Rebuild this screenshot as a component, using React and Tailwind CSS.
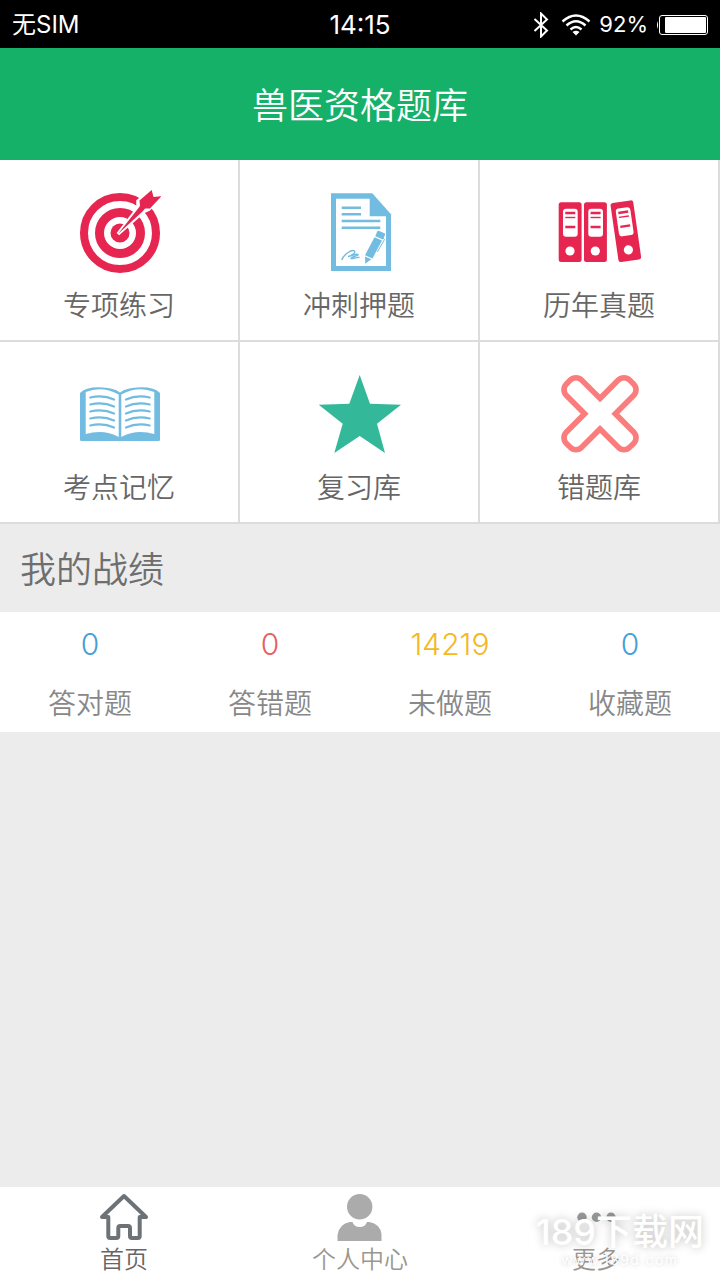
import React, { useState } from "react";

const TargetIcon = () => (
  <svg viewBox="0 0 84 84" className="w-[84px] h-[84px]" fill="none">
    <circle cx="43" cy="43" r="36" stroke="#e62550" strokeWidth="8" />
    <circle cx="43" cy="43" r="20.5" stroke="#e62550" strokeWidth="9" />
    <circle cx="43" cy="43" r="9.5" fill="#e62550" />
    <path
      d="M41 44L61 18L61 11L74 1L77 8L83 7L72 19L66 22Z"
      fill="#fff"
      stroke="#fff"
      strokeWidth="3.5"
    />
    <path
      d="M41 44L61.5 18L63 16L62.500 10.500L74.700 0L76.500 7L84.500 6.300L73 18.500L68 18.500L65.500 21.500Z"
      fill="#e62550"
    />
  </svg>
);

const PaperIcon = () => (
  <svg viewBox="0 0 84 84" className="w-[84px] h-[84px]" fill="none">
    <path d="M14 3.300H55.300L74 24.300V81H14Z" fill="#71bce0" />
    <path d="M19 8.700H52.700V26.300H69V76H19Z" fill="#fff" />
    <path
      d="M24.700 17.700H44M24.700 24.300H44M24.700 31H63.300M24.700 37.700H63.300"
      stroke="#71bce0"
      strokeWidth="2.4"
    />
    <path
      d="M24.700 70C27 64 35 59 37.500 61C39 63 34 66 31 66.500C35 66 40 63 41 64.500C41.500 66 34 66.500 34 68.500C36 69.500 39 66.500 42.500 67.500"
      stroke="#71bce0"
      strokeWidth="1.400"
    />
    <path
      d="M61.500 40.700L67.500 43.300Q68.500 44 68 45L66 49.500L58.300 46.300L60.200 41.500Q60.600 40.500 61.500 40.700Z"
      fill="#71bce0"
    />
    <path d="M57.500 47.200L65 50.500L55.500 68.500L48 65.300Z" fill="#71bce0" />
    <path d="M48 66.500L54.300 69.200L48.300 73.700Z" fill="#71bce0" />
    <path d="M65 47.500L67.500 49.500L60.300 62" stroke="#71bce0" strokeWidth="1" />
  </svg>
);

const Binder = ({ transform }) => (
  <g transform={transform}>
    <rect x="1.700" y="12.300" width="22.900" height="59.700" rx="2.500" fill="#e62550" />
    <rect x="6" y="18.700" width="14.700" height="28" rx="3" fill="#fff" />
    <path d="M8.300 23H18.300M8.300 37H18.300" stroke="#e62550" strokeWidth="2.4" />
    <path d="M8.300 27.500H18.300" stroke="#e62550" strokeWidth="1.400" />
    <circle cx="13" cy="61" r="4.600" fill="#fff" />
  </g>
);

const BindersIcon = () => (
  <svg viewBox="0 0 84 84" className="w-[84px] h-[84px] overflow-visible">
    <Binder />
    <Binder transform="translate(25.300 0)" />
    <Binder transform="translate(68.700 41.300) rotate(-8.200) translate(-13 -42.200)" />
  </svg>
);

const BookIcon = () => (
  <svg viewBox="0 0 84 84" className="w-[84px] h-[84px]" fill="none">
    <path
      d="M3 21Q8 15.300 22 15.300Q37 15.500 43 20.500Q49 15.500 64 15.300Q78 15.300 83 21V67.500Q83 69 81.500 69H4.500Q3 69 3 67.500Z"
      fill="#71bce0"
    />
    <path d="M8.700 20Q25 13.500 41.700 22.500V65Q27 57 8.700 62Z" fill="#fff" />
    <path d="M77.300 20Q61 13.500 44.300 22.500V65Q59 57 77.300 62Z" fill="#fff" />
    {[25.5, 32.5, 39.5, 46.5, 53.5].map((y) => (
      <path
        key={`line-${y}`}
        d={`M13.300 ${y}Q26 ${y - 3} 37 ${y + 2}M72.700 ${y}Q60 ${y - 3} 49 ${y + 2}`}
        stroke="#71bce0"
        strokeWidth="2.200"
        strokeLinecap="round"
      />
    ))}
  </svg>
);

const StarIcon = () => (
  <svg viewBox="0 0 84 84" className="w-[84px] h-[84px]">
    <path
      d="M42.700 3L53 31.700L84 32.700L60 51.700L68 81L42.700 64L17.300 81L25.700 51.700L1.700 32.700L32.300 31.700Z"
      fill="#33b999"
    />
  </svg>
);

const CrossIcon = () => (
  <svg viewBox="0 0 84 84" className="w-[84px] h-[84px]" fill="none">
    <path
      transform="translate(43 41.700)"
      d="M0 -15.300L18.300 -33.600A8 8 0 0 1 29.700 -33.600L33.600 -29.700A8 8 0 0 1 33.600 -18.300L15.300 0L33.600 18.300A8 8 0 0 1 33.600 29.700L29.700 33.600A8 8 0 0 1 18.300 33.600L0 15.300L-18.300 33.600A8 8 0 0 1 -29.700 33.600L-33.600 29.700A8 8 0 0 1 -33.600 18.300L-15.300 0L-33.600 -18.300A8 8 0 0 1 -33.600 -29.700L-29.700 -33.600A8 8 0 0 1 -18.300 -33.600Z"
      stroke="#fb7c7c"
      strokeWidth="5.600"
    />
  </svg>
);

const HomeIcon = () => (
  <svg viewBox="0 0 50 50" className="w-[50px] h-[50px]" fill="none">
    <path
      d="M25 4L47 25H40.700V44Q40.700 46 38.700 46H33Q31 46 31 44V36Q31 34 29 34H21.300Q19.300 34 19.300 36V44Q19.300 46 17.300 46H11.300Q9.300 46 9.300 44V25H3Z"
      stroke="#6c7275"
      strokeWidth="4"
      strokeLinejoin="round"
    />
  </svg>
);

const PersonIcon = () => (
  <svg viewBox="0 0 50 50" className="w-[50px] h-[50px]" fill="#ababab">
    <circle cx="24.700" cy="14.700" r="12.700" />
    <path d="M2.500 49V43Q4 32 15 30H17.500Q19 35 24.700 35Q30.500 35 32 30H34.500Q45 32 46.500 42V49Z" />
  </svg>
);

const MoreIcon = () => (
  <svg viewBox="0 0 50 50" className="w-[50px] h-[50px]" fill="#999">
    <circle cx="11" cy="25.300" r="4.700" />
    <circle cx="25.500" cy="25.300" r="4.700" />
    <circle cx="40" cy="25.300" r="4.700" />
  </svg>
);

const menu = [
  { name: "专项练习", Icon: TargetIcon },
  { name: "冲刺押题", Icon: PaperIcon },
  { name: "历年真题", Icon: BindersIcon },
  { name: "考点记忆", Icon: BookIcon },
  { name: "复习库", Icon: StarIcon },
  { name: "错题库", Icon: CrossIcon },
];

const scores = [
  { name: "答对题", value: 0, color: "text-[#45a0d8]" },
  { name: "答错题", value: 0, color: "text-[#e65f66]" },
  { name: "未做题", value: 14219, color: "text-[#f5b81f]" },
  { name: "收藏题", value: 0, color: "text-[#45a0d8]" },
];

const tabs = [
  { name: "首页", Icon: HomeIcon },
  { name: "个人中心", Icon: PersonIcon },
  { name: "更多", Icon: MoreIcon },
];

const StatusBar = () => (
  <div className="grid grid-cols-3 items-center h-12 pt-0.5 px-3 bg-black text-white text-2xl">
    <span>无SIM</span>
    <span className="text-center text-[26px]">14:15</span>
    <div className="flex items-center justify-end">
      <svg viewBox="0 0 16 26" className="w-4 h-[26px] mr-3" fill="none">
        <path d="M1.500 7L14 18.500L8 24.500V1.500L14 7.500L1.500 19" stroke="#fff" strokeWidth="2" />
      </svg>
      <svg viewBox="0 0 30 22" className="w-[30px] h-[22px] mr-2" fill="none">
        <path
          d="M1.500 7.500Q15 -4.500 28.500 7.500M5.500 11.500Q15 3 24.500 11.500M9.500 15.500Q15 10.500 20.500 15.500"
          stroke="#fff"
          strokeWidth="2.400"
        />
        <path d="M11.500 18Q15 15.500 18.500 18L15 21.500Z" fill="#fff" />
      </svg>
      <span className="text-[22px] mr-2">92%</span>
      <svg viewBox="0 0 52 20" className="w-[52px] h-5" fill="none">
        <path d="M2 6Q0 10 2 14Z" fill="#fff" />
        <rect x="3.500" y="0.500" width="48" height="19" rx="2.500" stroke="#fff" />
        <rect x="9" y="2" width="41" height="16" rx="1" fill="#fff" />
      </svg>
    </div>
  </div>
);

const App = () => {
  const [activeTab, setActiveTab] = useState("首页");

  return (
    <div className="flex flex-col min-h-screen bg-[#ececec] font-['Inter','Noto_Sans_CJK_SC',sans-serif]">
      <StatusBar />
      <header className="flex items-center justify-center h-28 pt-1 bg-[#15b168]">
        <h1 className="text-4xl font-[350] text-white">兽医资格题库</h1>
      </header>

      <main className="flex-1 font-[350]">
        <div className="grid grid-cols-3 bg-white">
          {menu.map(({ name, Icon }) => (
            <button
              key={name}
              className="flex flex-col items-center gap-3 pt-[30px] pb-3.5 border-r-2 border-b-2 border-[#dcdcdc]"
            >
              <Icon />
              <span className="text-[28px] leading-10 text-[#666]">{name}</span>
            </button>
          ))}
        </div>

        <h2 className="px-5 pt-1 text-4xl leading-[84px] text-[#6e6e6e]">我的战绩</h2>

        <dl className="grid grid-cols-4 bg-white text-center">
          {scores.map((score) => (
            <div key={score.name} className="flex flex-col-reverse">
              <dt className="text-[28px] leading-[56px] text-[#888]">{score.name}</dt>
              <dd className={`text-3xl leading-[64px] font-light ${score.color}`}>
                {score.value}
              </dd>
            </div>
          ))}
        </dl>
      </main>

      <nav className="relative grid grid-cols-3 px-1.5 pt-[5px] pb-1 bg-white">
        {tabs.map(({ name, Icon }) => (
          <button
            key={name}
            className="flex flex-col items-center gap-0.5"
            onClick={() => setActiveTab(name)}
          >
            <Icon />
            <span
              className={`text-2xl leading-8 font-[350] ${
                activeTab === name ? "text-[#666]" : "text-[#9c978e]"
              }`}
            >
              {name}
            </span>
          </button>
        ))}
        <div className="absolute right-4 bottom-3 flex flex-col items-center text-white pointer-events-none">
          <span className="text-4xl leading-10 font-medium [text-shadow:0_0_10px_#0004]">
            189下载网
          </span>
          <span className="text-sm leading-4 tracking-widest [text-shadow:0_0_5px_#0003]">
            www.189d.com
          </span>
        </div>
      </nav>
    </div>
  );
};

export default App;
